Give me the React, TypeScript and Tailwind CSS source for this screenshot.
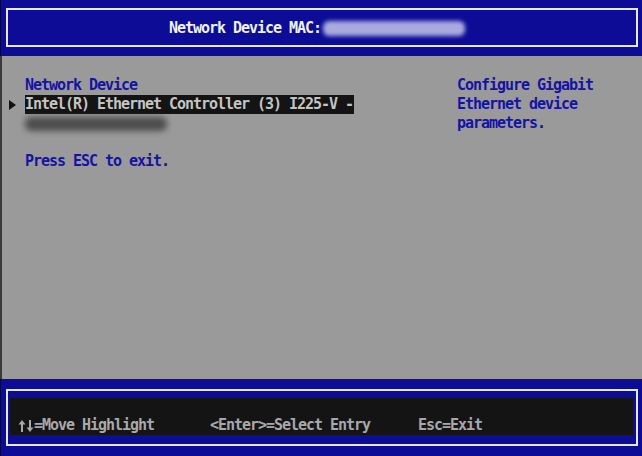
function Arrow({ down = false }: { down?: boolean }) {
    return (
        <svg width="8" height="14" viewBox="0 0 8 14" className={down ? 'rotate-180 mb-[2px]' : 'mb-[2px]'}>
            <path d="M4 1 L7.5 5.5 H5 V13 H3 V5.5 H0.5 Z" fill="#a8a8a8" />
        </svg>
    )
}

export default function App() {
    const mono = { fontFamily: '"DejaVu Sans Mono", "Liberation Mono", monospace' }

    return (
        <div
            className="w-[642px] h-[456px] flex flex-col bg-[#0c0c96] overflow-hidden font-bold text-[15px] tracking-[-1.03px] leading-[19px]"
            style={mono}
        >
            {/* header */}
            <div className="h-[56px] pt-[8px] pl-[5px] pr-[4px] border-l border-[#04044a]">
                <div className="h-[39px] border-2 border-[#e8e8f4] flex items-center pt-[2px] pl-[161px]">
                    <span className="text-[#f0f0f0]">Network Device MAC:</span>
                    <div className="relative w-[146px] h-[19px]">
                        <div className="absolute left-[2px] top-[2px] w-[142px] h-[15px] rounded-[6px] bg-[#aaaae0] blur-[2px]"></div>
                    </div>
                </div>
            </div>

            {/* body */}
            <div className="h-[323px] bg-[#9a9a9a] border-l-2 border-[#3a3a3a] flex pt-[20px]">
                <div className="w-[430px] flex flex-col">
                    <div className="pl-[23px] text-[#1414a4]">Network Device</div>
                    <div className="flex items-center h-[19px]">
                        <div className="w-[23px] flex pl-[7px]">
                            <span className="block w-0 h-0 border-y-[5px] border-y-transparent border-l-[7px] border-l-[#111111]"></span>
                        </div>
                        <span className="bg-[#141414] text-[#c4c4c4] pr-[1px]">Intel(R) Ethernet Controller (3) I225-V -</span>
                    </div>
                    <div className="relative h-[19px]">
                        <div className="absolute left-[23px] top-[3px] w-[142px] h-[14px] rounded-[6px] bg-[#3a3a3a] blur-[3px] opacity-80"></div>
                    </div>
                    <div className="h-[19px]"></div>
                    <div className="pl-[23px] text-[#1414a4]">Press ESC to exit.</div>
                </div>
                <div className="pl-[25px] text-[#1414a4]">
                    <div>Configure Gigabit</div>
                    <div>Ethernet device</div>
                    <div>parameters.</div>
                </div>
            </div>

            {/* footer */}
            <div className="h-[77px] pt-[10px] pl-[5px] pr-[4px] border-l border-[#04044a]">
                <div className="h-[57px] border-2 border-[#e8e8f4] pt-[7px] pl-[2px] pr-[3px]">
                    <div className="h-[37px] bg-[#141414] text-[#a8a8a8] flex items-end pl-[8px]">
                        <span className="w-[192px] flex items-end">
                            <Arrow />
                            <Arrow down />
                            <span>=Move Highlight</span>
                        </span>
                        <span className="w-[208px]">&lt;Enter&gt;=Select Entry</span>
                        <span>Esc=Exit</span>
                    </div>
                </div>
            </div>
        </div>
    )
}
